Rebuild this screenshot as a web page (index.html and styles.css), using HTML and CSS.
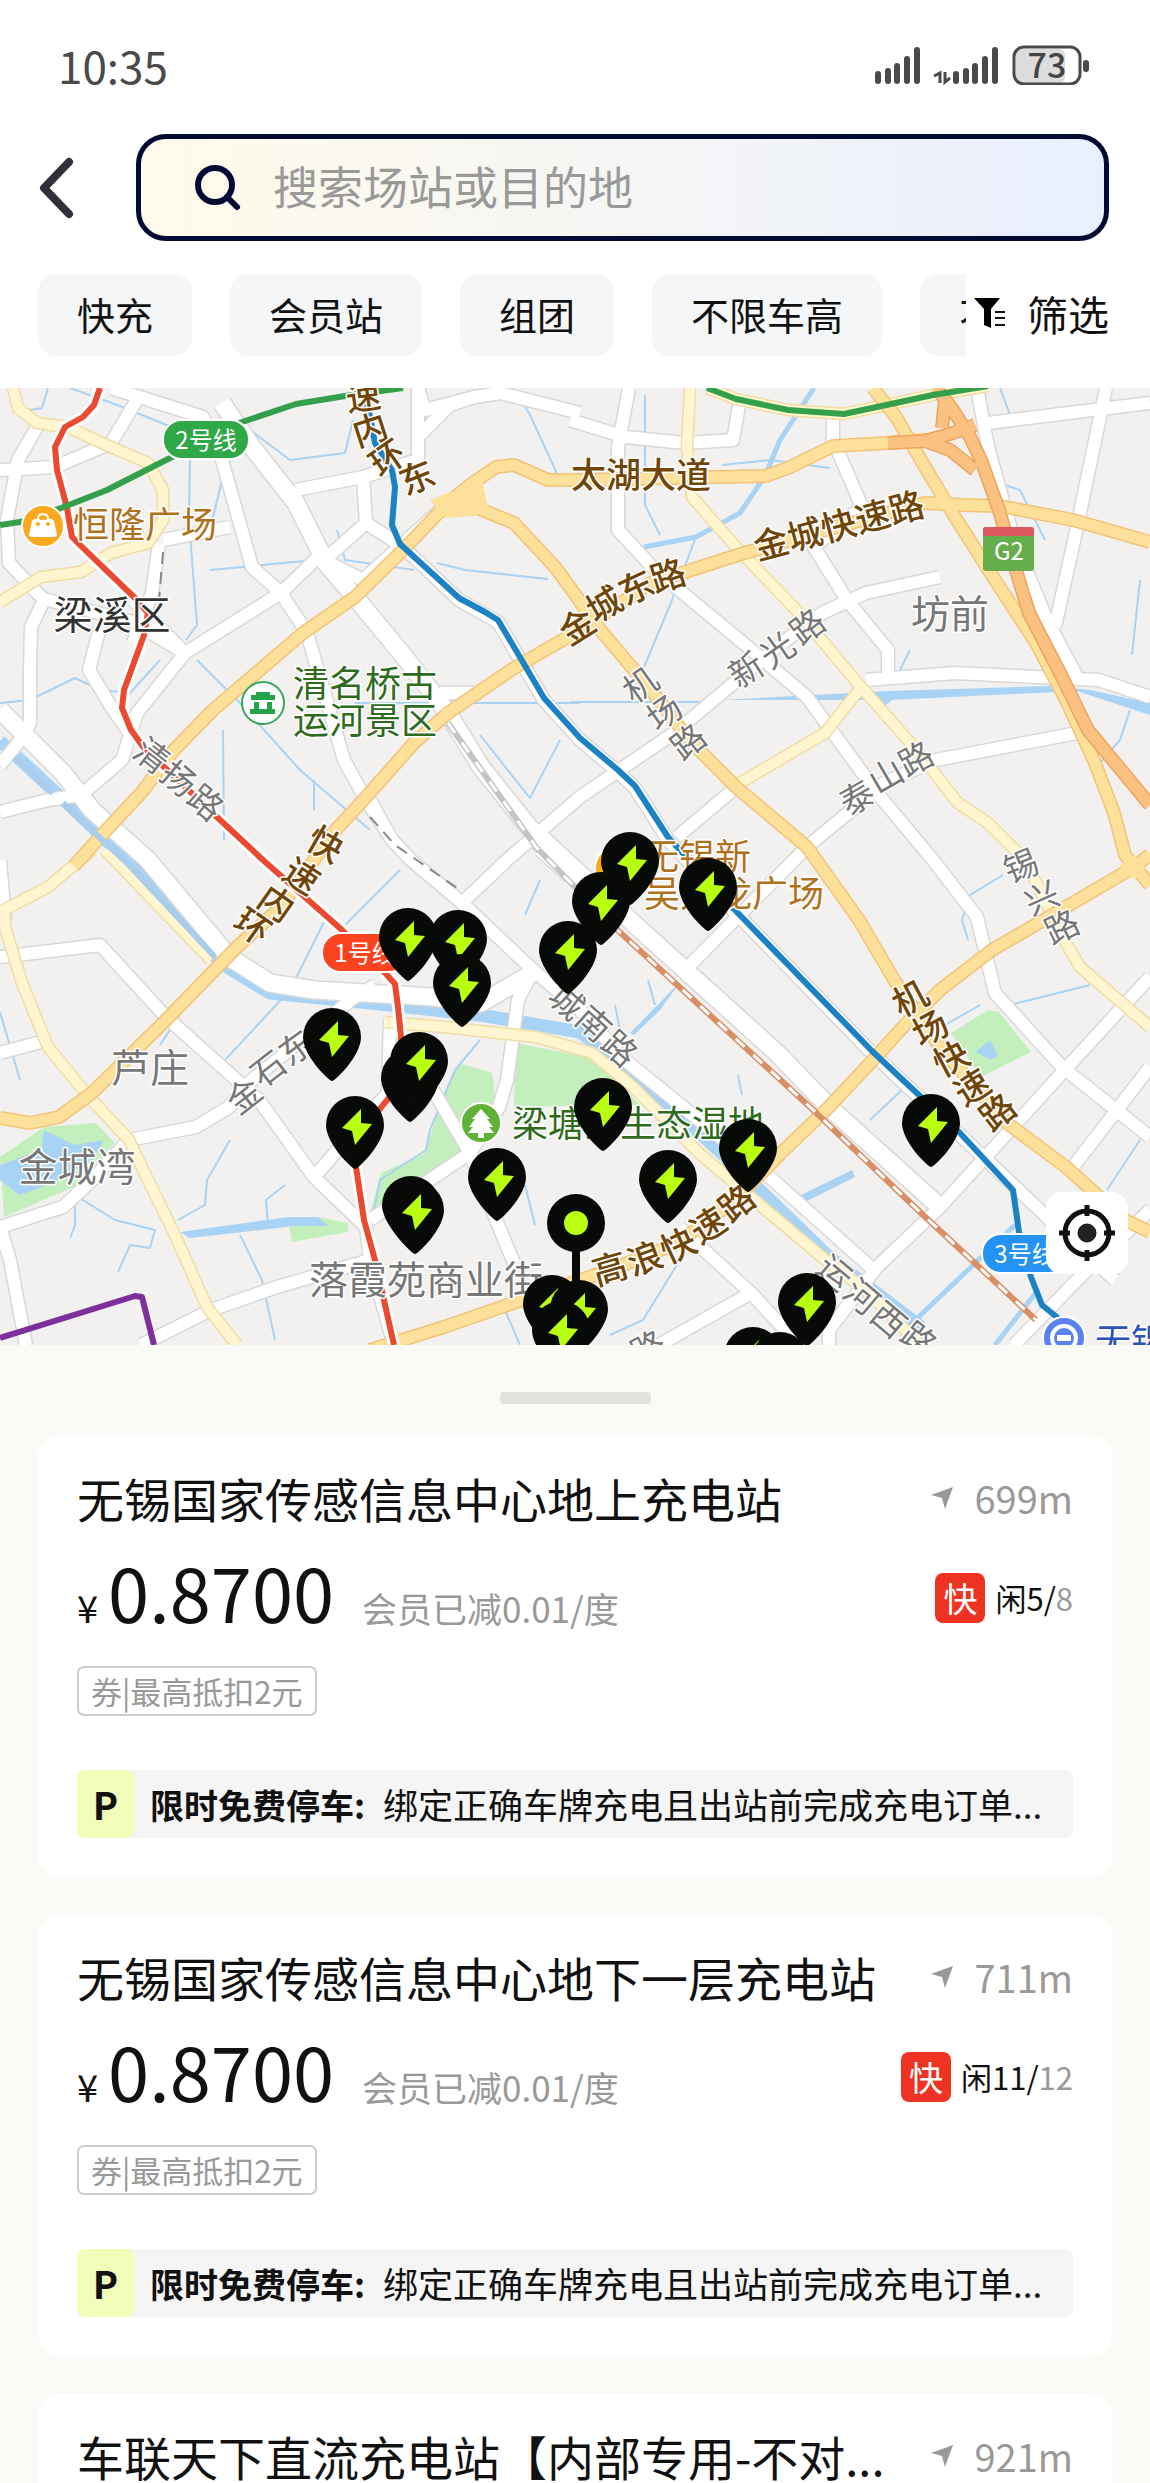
FILE: index.html
```html
<!DOCTYPE html>
<html lang="zh-CN">
<head>
  <meta charset="UTF-8">
  <meta name="viewport" content="width=device-width, initial-scale=1.0">
  <title>充电站地图</title>

  <link rel="stylesheet" href="styles.css">
</head>
<body>
  <header class="header">
    <div class="status-bar">
      <span class="time">10:35</span>
      <svg class="status-icons" width="216" height="40" viewBox="0 0 216 40" aria-hidden="true">
        <g class="signal">
          <path d="M4 29V36M14 26V36M23 21V36M33 14V36M43 5V36"/>
          <path d="M82 29V36M92 26V36M101 21V36M111 14V36M121 5V36"/>
        </g>
        <path class="arrows" d="M60 31L66 28V38M71 27V37L76 33"/>
        <rect class="charge" x="142" y="4" width="49" height="34" rx="6"/>
        <rect class="battery" x="140" y="2" width="66" height="37" rx="10"/>
        <path class="signal" d="M212 18V24"/>
        <text class="level" x="173" y="33">73</text>
      </svg>
    </div>
    <div class="search-row">
      <button class="back" aria-label="返回">
        <svg width="38" height="64" viewBox="0 0 38 64"><path d="M31 6L6 32L31 58"/></svg>
      </button>
      <label class="search">
        <svg width="48" height="48" viewBox="0 0 48 48"><circle cx="20" cy="21" r="17"/><path d="M32 33L42 43"/></svg>
        <input type="text" placeholder="搜索场站或目的地" aria-label="搜索">
      </label>
    </div>
    <div class="filter-row">
      <div class="chips">
        <button class="chip">快充</button>
        <button class="chip">会员站</button>
        <button class="chip">组团</button>
        <button class="chip">不限车高</button>
        <button class="chip">不限</button>
      </div>
      <button class="filter">
        <svg width="33" height="32" viewBox="0 0 33 32"><path d="M1 1H27L18 12V31L11 28V12Z"/><path class="lines" d="M22 15H32M22 21H32M22 28H32"/></svg>
        筛选
      </button>
    </div>
  </header>

  <section class="map">
    <svg class="map-canvas" viewBox="0 388 1150 957" role="img" aria-label="地图">
      <defs>
        <g id="streets">
          <path d="M0 470L55 467L111 443L141 393"/>
          <path d="M37 427L18 460L7 520L9 563L44 600L31 627L30 670V723L18 743L0 765"/>
          <path d="M159 543L152 593L133 643"/>
          <path d="M40 598L133 622L185 653L137 713L122 760L81 795L48 800L0 812"/>
          <path d="M100 627L89 670L110 705L131 735"/>
          <path d="M133 600L185 653L281 593L318 557L363 580L448 503"/>
          <path d="M111 388L203 417L222 460L252 567L281 593L307 633L344 760L366 800L392 840L411 860L462 903L533 970L518 1000L507 1080L499 1107L470 1153L370 1220"/>
          <path d="M580 413L500 393L474 397L425 410L418 388V460L363 477L296 490M363 477L366 523L330 555"/>
          <path d="M418 437L450 405L474 397"/>
          <path d="M366 523L403 547L459 600L498 622L544 700L580 740L618 772L635 788L668 840L733 910L873 1054L921 1099L960 1135L1047 1217L1115 1280"/>
          <path d="M163 540L230 527"/>
          <path d="M440 693H481"/>
          <path d="M0 957L100 945L166 1017L259 1100L314 1177L366 1227L370 1260L394 1345"/>
          <path d="M0 1053L48 1040"/>
          <path d="M129 1140L196 1127L229 1107L252 1080L351 1000L375 985"/>
          <path d="M0 1227L63 1207L92 1180L126 1143"/>
          <path d="M0 1227L10 1260L26 1345"/>
          <path d="M141 1345L211 1310L277 1287L370 1260"/>
          <path d="M314 1177L388 1093L390 1020"/>
          <path d="M433 1090L470 1153L499 1227L514 1263"/>
          <path d="M462 903L507 860L580 797L674 733L729 687L777 647L822 613L866 593L940 577"/>
          <path d="M370 800L392 840M0 860L5 920"/>
          <path d="M570 420L625 437L685 443L733 440L740 400"/>
          <path d="M629 388L618 447V530L655 570L748 647L807 697L829 727L877 793L933 860L977 917L995 993L1062 1067L1150 1137"/>
          <path d="M833 417V440L862 507L814 547L847 600L888 650V676"/>
          <path d="M866 680L955 673L1099 680L1150 697"/>
          <path d="M977 388L988 447L1014 540L1047 620L1077 677"/>
          <path d="M988 423L1150 403M1106 388L1077 527L1055 627"/>
          <path d="M1077 733L936 760L884 783L807 847L685 970L533 840"/>
          <path d="M570 877L540 850M733 790L677 837"/>
          <path d="M877 1267L829 1330L829 1345M877 1267L940 1207L1062 1073L1150 977"/>
          <path d="M1150 1067L1073 1167M1150 1210L1084 1273L1014 1345"/>
          <path d="M533 970L580 1010L625 1060L773 1180L877 1273"/>
          <path d="M680 1228L751 1293L799 1345M751 1293L659 1345"/>
        </g>
        <g id="avenues">
          <path d="M222 403L252 447L296 503L326 563L355 597L407 660L448 713L481 767L529 827L633 923L685 970L777 1053L829 1107L940 1207"/>
          <path d="M0 710L63 773L92 810L148 860L229 957L270 983L314 990L433 997L481 1003L533 973"/>
        </g>
        <g id="roads">
          <path d="M13 388L18 408L37 423L67 427L111 447L148 463L163 490V520L148 543L111 553L81 572L41 577L0 602"/>
          <path d="M92 850L48 887L4 910L5 927L22 983L48 1047L89 1097L129 1140L148 1180L174 1233L207 1307L237 1345"/>
          <path d="M105 850L211 960"/>
          <path d="M385 1022L444 1027L536 1037L592 1053L633 1087L699 1153L766 1210L829 1263L866 1290L920 1345"/>
          <path d="M690 388L687 447L692 497L736 547L799 613L855 680L914 747L958 803L988 823L1025 860L1066 943L1080 967L1150 1027"/>
          <path d="M859 690L825 733L740 783"/>
          <path d="M707 388L736 399L788 410L844 414L933 395L988 386"/>
        </g>
        <g id="expressways">
          <path d="M74 866L100 837L141 793L174 750L213 710L303 633L355 597L400 553L448 503L470 485L496 467L514 465L548 480L580 480L718 477L766 476L788 468L833 446L888 443L950 438"/>
          <path d="M470 505L514 523L555 567L577 597L592 620L651 690L692 743L736 787L807 847L859 920L896 983L940 1047L1007 1123L1066 1167L1125 1220L1150 1232"/>
          <path d="M333 833L366 797L414 743L448 713L514 668L580 630L651 583L744 553L851 523L925 503L962 505L1000 506"/>
          <path d="M1000 506L1073 520L1150 542"/>
          <path d="M333 833L281 907L237 947L166 1020L92 1093L59 1117L30 1123L0 1118"/>
          <path d="M873 388L896 417L925 467L955 517L995 580L1036 643L1066 700L1095 763L1114 813L1125 855L1150 885"/>
          <path d="M1150 855L1129 870L1066 907L992 950L940 990L903 1027L873 1060L829 1107L781 1153L735 1200L678 1243L610 1270L522 1300L444 1327L370 1350"/>
        </g>
        <g id="motorway">
          <path d="M936 388L951 407L970 437L981 460L999 510L1018 577L1029 613L1062 677L1088 730L1150 805"/>
          <path d="M888 443L925 441L953 433L975 425M925 441L950 450L975 470M945 400L942 428"/>
        </g>
        <g id="pin">
          <path class="pin-body" d="M0 0C-3 0 -29 -25 -29 -44A29 29 0 0 1 29 -44C29 -25 3 0 0 0Z"/>
          <path class="bolt" d="M6 -60L-13 -41L-3 -38L0 -24L17 -45L6 -46Z"/>
        </g>
      </defs>

      <rect class="land" y="388" width="1150" height="957"/>

      <g class="park">
        <path d="M459 1063L492 1073L497 1110L470 1153L370 1213L381 1173L425 1153L444 1093Z"/>
        <path d="M516 1043L592 1058L640 1105L514 1107Z"/>
        <path d="M289 1227L318 1217L348 1223V1232L292 1242Z"/>
        <path d="M0 1157L44 1127L96 1123L115 1143L74 1187L4 1217Z"/>
        <path d="M988 1010L999 1012L1031 1052L981 1077L951 1033Z"/>
      </g>
      <g class="lake">
        <path d="M0 1165L41 1150L44 1130L75 1145L104 1140L92 1160L48 1185L20 1195L28 1202L0 1180Z"/>
        <path d="M722 700L888 691L1051 686L1090 690L1150 703V715L1077 691L892 700L885 706L875 700Z"/>
        <path d="M976 1052L990 1040L998 1056L990 1060Z"/>
        <path d="M180 1232L289 1217L318 1217L328 1226L295 1226L190 1238Z"/>
        <path d="M795 1198L852 1170L855 1177L805 1202Z"/>
        <path d="M630 1033L680 982L660 1010L634 1035Z"/>
      </g>
      <g class="river">
        <path d="M0 741L67 803L126 859L222 964L270 993L370 1003L480 1015L580 1032L644 1082L729 1160L829 1257L921 1327"/>
      </g>
      <g class="stream">
        <path d="M48 388L42 408L18 412M70 388L120 406L203 440"/>
        <path class="wide" d="M814 388L780 440L765 476L740 513L696 537L644 547"/>
        <path d="M696 537L670 605L644 667M722 465L770 460L830 468M910 650L895 680"/>
        <path d="M190 450L189 520L197 625L186 640M222 480L210 530"/>
        <path d="M0 703L30 700L75 678L100 690L130 693L160 660"/>
        <path d="M337 530L345 560L414 570M437 563L465 570L548 579M210 570L337 558M514 388L530 415L560 480M250 430L290 460L345 453L353 420"/>
        <path d="M355 703H580M570 702H722M197 660L240 703L300 770L370 830"/>
        <path d="M223 730L224 840M314 780V810M480 735L530 798L560 740"/>
        <path d="M400 870L345 925M540 880L525 915M330 910L290 990L225 1060M196 990L160 1045"/>
        <path d="M480 1040L455 1070L430 1130L426 1150L380 1180L373 1215"/>
        <path d="M75 1195V1225L70 1238M75 1195L115 1220L155 1230L150 1248L130 1245L118 1272M230 1140L207 1180L205 1205L178 1220"/>
        <path d="M240 1235L262 1280L275 1340M0 1012L20 1080M285 1185L266 1200L268 1225"/>
        <path d="M525 1185L535 1225M683 1255L643 1320L610 1335M505 1310L520 1345"/>
        <path d="M990 480L1020 490L1045 540M1000 388L1010 415M645 395V505L660 535M1140 580L1132 655"/>
        <path d="M1130 710L1120 740L1100 763M970 895L1003 875M970 895L962 920L968 940"/>
        <path d="M1010 1005L1090 985M902 1090L870 1120M1140 1140L1107 1190M945 1025L980 1005"/>
        <path class="wide" d="M1015 1225L905 1330M1038 1290L995 1345"/>
        <path d="M738 1075L742 1095M648 980L655 1005M615 1005L620 1030"/>
      </g>

      <use href="#streets" class="street-casing"/>
      <use href="#avenues" class="avenue-casing"/>
      <use href="#streets" class="street"/>
      <use href="#avenues" class="avenue"/>
      <use href="#roads" class="road-casing"/>
      <use href="#roads" class="road"/>
      <use href="#expressways" class="expressway-casing"/>
      <path class="junction" d="M430 500L448 493L462 490L482 476L484 490L488 508L475 516L445 518Z"/>
      <use href="#expressways" class="expressway"/>
      <use href="#motorway" class="motorway-casing"/>
      <use href="#motorway" class="motorway"/>
      <path class="junction" d="M1120 865L1135 855L1145 868L1135 880Z"/>
      <path class="canal" d="M15 757L53 793M63 803L100 838L126 862L215 957"/>

      <path class="rail" d="M448 723L536 847L612 925"/>
      <path class="rail rail-dash" d="M448 723L536 847L612 925"/>
      <path class="rail rail-orange" d="M612 925L810 1107L921 1213L1036 1320"/>
      <path class="rail rail-dash" d="M612 925L810 1107L921 1213L1036 1320"/>
      <path class="tracks" d="M163 552L159 600M370 817L395 845L460 890"/>

      <g class="metro-halo">
        <path d="M100 388L94 405L83 417L65 427L55 447L57 470L67 508L72 537L80 545L135 598L148 613L144 635L124 690L122 708L131 730L144 748L218 818L263 860L342 930L387 975L395 984L398 1007L401 1037"/>
        <path d="M356 1167L364 1220L375 1260L394 1345"/>
      </g>
      <path class="metro line1" d="M100 388L94 405L83 417L65 427L55 447L57 470L67 508L72 537L80 545L135 598L148 613L144 635L124 690L122 708L131 730L144 748L218 818L263 860L342 930L387 975L395 984L398 1007L401 1037L403 1080L379 1110L355 1130L356 1167L364 1220L375 1260L394 1345"/>
      <path class="metro line2" d="M0 525L20 522L61 508L107 490L170 458L242 422L296 404L351 395L403 388M707 388L736 399L788 410L844 414L933 395L988 386"/>
      <path class="metro line3" d="M363 388L370 417L375 443L392 470L395 487L392 525L400 544L459 598L485 612L498 620L544 698L580 738L618 770L635 786L668 837L733 908L873 1052L921 1097L960 1133L1013 1190L1019 1232L1031 1277L1042 1305L1058 1318"/>
      <path class="metro line4" d="M0 1338L135 1296L142 1297L154 1345"/>

      <g class="line-tag">
        <rect class="tag2" x="163" y="420" width="86" height="39" rx="19"/><text x="206" y="438">2号线</text>
        <rect class="tag1" x="322" y="933" width="86" height="39" rx="19"/><text x="365" y="951">1号线</text>
        <rect class="tag3" x="982" y="1234" width="86" height="39" rx="19"/><text x="1025" y="1252">3号线</text>
      </g>

      <g class="shield">
        <rect class="shield-body" x="983" y="527" width="51" height="44" rx="3"/>
        <path class="shield-top" d="M983 536V530Q983 527 986 527H1031Q1034 527 1034 530V536Z"/>
        <text x="1009" y="549">G2</text>
      </g>

      <g class="label district">
        <text class="dark" x="112" y="612">梁溪区</text>
        <text x="950" y="611">坊前</text>
        <text x="150" y="1065">芦庄</text>
        <text x="77" y="1164">金城湾</text>
        <text x="426" y="1277">落霞苑商业街</text>
      </g>

      <g class="label expressway-name">
        <text x="641" y="472">太湖大道</text>
        <text transform="translate(838 523) rotate(-15)">金城快速路</text>
        <text transform="translate(576 624) rotate(-32)">金</text>
        <text transform="translate(603 602) rotate(-30)">城</text>
        <text transform="translate(635 585) rotate(-25)">东</text>
        <text transform="translate(667 573) rotate(-18)">路</text>
        <text transform="translate(363 394) rotate(-8)">速</text>
        <text transform="translate(369 427) rotate(-18)">内</text>
        <text transform="translate(386 456) rotate(-35)">环</text>
        <text transform="translate(416 475) rotate(-22)">东</text>
        <text transform="translate(327 842) rotate(30)">快</text>
        <text transform="translate(303 874) rotate(33)">速</text>
        <text transform="translate(278 901) rotate(35)">内</text>
        <text transform="translate(254 924) rotate(35)">环</text>
        <text transform="translate(909 996) rotate(-28)">机</text>
        <text transform="translate(929 1026) rotate(-28)">场</text>
        <text transform="translate(950 1056) rotate(-28)">快</text>
        <text transform="translate(971 1085) rotate(-32)">速</text>
        <text transform="translate(996 1110) rotate(-38)">路</text>
        <text transform="translate(609 1266) rotate(-16)">高</text>
        <text transform="translate(644 1256) rotate(-20)">浪</text>
        <text transform="translate(677 1243) rotate(-25)">快</text>
        <text transform="translate(707 1223) rotate(-32)">速</text>
        <text transform="translate(735 1201) rotate(-38)">路</text>
      </g>

      <g class="label road-name">
        <text transform="translate(153 754) rotate(38)">清</text>
        <text transform="translate(180 777) rotate(40)">扬</text>
        <text transform="translate(207 801) rotate(40)">路</text>
        <text transform="translate(745 668) rotate(-33)">新</text>
        <text transform="translate(776 648) rotate(-35)">光</text>
        <text transform="translate(806 625) rotate(-37)">路</text>
        <text transform="translate(639 683) rotate(-35)">机</text>
        <text transform="translate(663 711) rotate(-35)">场</text>
        <text transform="translate(687 740) rotate(-38)">路</text>
        <text transform="translate(856 796) rotate(-30)">泰</text>
        <text transform="translate(885 774) rotate(-30)">山</text>
        <text transform="translate(915 757) rotate(-28)">路</text>
        <text transform="translate(1020 864) rotate(-22)">锡</text>
        <text transform="translate(1041 896) rotate(-24)">兴</text>
        <text transform="translate(1061 925) rotate(-26)">路</text>
        <text transform="translate(243 1094) rotate(-38)">金</text>
        <text transform="translate(267 1067) rotate(-38)">石</text>
        <text transform="translate(295 1046) rotate(-36)">东</text>
        <text transform="translate(568 1000) rotate(42)">城</text>
        <text transform="translate(595 1022) rotate(42)">南</text>
        <text transform="translate(621 1047) rotate(42)">路</text>
        <text transform="translate(836 1271) rotate(40)">运</text>
        <text transform="translate(863 1295) rotate(40)">河</text>
        <text transform="translate(890 1318) rotate(40)">西</text>
        <text transform="translate(920 1338) rotate(38)">路</text>
        <text transform="translate(647 1346) rotate(-28)">路</text>
      </g>

      <g class="poi mall">
        <circle cx="43" cy="526" r="21"/>
        <path class="glyph" d="M32 521Q33 519 35 519H37Q37 513 43 513Q49 513 49 519H51Q53 519 54 521L57 535Q57 537 55 537H31Q29 537 29 535Z"/>
        <path class="eyes" d="M38 524V524M48 524V524M41 518Q43 516 45 518"/>
        <circle cx="616" cy="868" r="21"/>
      </g>
      <g class="label mall-name">
        <text x="145" y="522">恒隆广场</text>
        <text x="697" y="854">无锡新</text>
        <text x="734" y="891">吴九龙广场</text>
      </g>
      <g class="poi scenic">
        <circle cx="263" cy="703" r="21"/>
        <path class="glyph" d="M256 692H270V695H275V700H251V695H256ZM254 702H259V709H267V702H272V709H275V714H250V709H254Z"/>
      </g>
      <g class="poi forest">
        <circle cx="481" cy="1123" r="20"/>
        <path class="glyph" d="M481 1109L490 1119H487L493 1127H489L494 1133H484V1138H478V1133H468L473 1127H469L475 1119H472Z"/>
      </g>
      <g class="label park-name">
        <text x="365" y="681">清名桥古</text>
        <text x="365" y="718">运河景区</text>
        <text x="638" y="1121">梁塘河生态湿地</text>
      </g>
      <g class="poi station">
        <circle cx="1064" cy="1338" r="21"/>
        <circle class="ring" cx="1064" cy="1338" r="12"/>
        <path class="glyph" d="M1057 1335H1071V1341H1057Z"/>
      </g>
      <g class="label station-name">
        <text x="1131" y="1339">无锡</text>
      </g>

      <g class="pins">
        <use href="#pin" x="458" y="983"/>
        <use href="#pin" x="408" y="981"/>
        <use href="#pin" x="462" y="1027"/>
        <use href="#pin" x="332" y="1081"/>
        <use href="#pin" x="410" y="1122"/>
        <use href="#pin" x="419" y="1105"/>
        <use href="#pin" x="355" y="1169"/>
        <use href="#pin" x="411" y="1249"/>
        <use href="#pin" x="415" y="1254"/>
        <use href="#pin" x="497" y="1221"/>
        <use href="#pin" x="630" y="905"/>
        <use href="#pin" x="601" y="945"/>
        <use href="#pin" x="568" y="994"/>
        <use href="#pin" x="708" y="931"/>
        <use href="#pin" x="603" y="1151"/>
        <use href="#pin" x="668" y="1223"/>
        <use href="#pin" x="748" y="1192"/>
        <use href="#pin" x="931" y="1167"/>
        <use href="#pin" x="753" y="1400"/>
        <use href="#pin" x="780" y="1405"/>
        <use href="#pin" x="807" y="1346"/>
        <use href="#pin" x="552" y="1348"/>
        <use href="#pin" x="579" y="1353"/>
        <use href="#pin" x="561" y="1374"/>
      </g>
      <g class="here">
        <path d="M576 1240V1284"/>
        <circle class="pin-body" cx="576" cy="1223" r="29"/>
        <circle class="bolt" cx="576" cy="1223" r="12"/>
      </g>
    </svg>
    <button class="locate" aria-label="定位">
      <svg width="60" height="60" viewBox="0 0 60 60"><circle class="ring" cx="30" cy="30" r="22"/><path d="M30 2V13M30 47V58M2 30H13M47 30H58"/><circle class="dot" cx="30" cy="30" r="9"/></svg>
    </button>
  </section>

  <main class="sheet">
    <div class="handle"></div>

    <article class="card">
      <div class="card-head">
        <h2>无锡国家传感信息中心地上充电站</h2>
        <span class="distance"><svg width="22" height="22" viewBox="0 0 22 22"><path d="M0 8L22 0L14 22L11 11Z"/></svg>699m</span>
      </div>
      <div class="price-row">
        <p class="price"><small>¥</small><b>0.8700</b><span>会员已减0.01/度</span></p>
        <p class="idle"><span class="fast">快</span><span>闲5/<i>8</i></span></p>
      </div>
      <span class="coupon">券|最高抵扣2元</span>
      <div class="notice">
        <span class="parking">P</span>
        <p><strong>限时免费停车:</strong>绑定正确车牌充电且出站前完成充电订单...</p>
      </div>
    </article>

    <article class="card">
      <div class="card-head">
        <h2>无锡国家传感信息中心地下一层充电站</h2>
        <span class="distance"><svg width="22" height="22" viewBox="0 0 22 22"><path d="M0 8L22 0L14 22L11 11Z"/></svg>711m</span>
      </div>
      <div class="price-row">
        <p class="price"><small>¥</small><b>0.8700</b><span>会员已减0.01/度</span></p>
        <p class="idle"><span class="fast">快</span><span>闲11/<i>12</i></span></p>
      </div>
      <span class="coupon">券|最高抵扣2元</span>
      <div class="notice">
        <span class="parking">P</span>
        <p><strong>限时免费停车:</strong>绑定正确车牌充电且出站前完成充电订单...</p>
      </div>
    </article>

    <article class="card">
      <div class="card-head">
        <h2>车联天下直流充电站【内部专用-不对...</h2>
        <span class="distance"><svg width="22" height="22" viewBox="0 0 22 22"><path d="M0 8L22 0L14 22L11 11Z"/></svg>921m</span>
      </div>
    </article>
  </main>
</body>
</html>
```
FILE: styles.css
```css
* {
  box-sizing: border-box;
}

body {
  display: flex;
  flex-direction: column;
  height: 100vh;
  margin: 0;
  overflow: hidden;
  background-color: #fff;
  color: #111;
  font-family: "Noto Sans CJK SC", "Noto Sans", sans-serif;
}

h2, p {
  margin: 0;
  font-weight: 400;
}

button, input {
  padding: 0;
  border: none;
  background: none;
  color: inherit;
  font: inherit;
}

svg {
  display: block;
  flex-shrink: 0;
}

/* header */

.header {
  flex-shrink: 0;
  padding-bottom: 32px;
}

.status-bar {
  display: flex;
  align-items: center;
  justify-content: space-between;
  height: 134px;
  padding: 0 60px 4px 58px;
  color: #4a4a4a;
  font-size: 44px;
}

.signal {
  fill: none;
  stroke: #4a4a4a;
  stroke-width: 6;
  stroke-linecap: round;
}

.arrows {
  fill: none;
  stroke: #4a4a4a;
  stroke-width: 3;
}

.charge {
  fill: #dcdcdc;
}

.battery {
  fill: none;
  stroke: #4a4a4a;
  stroke-width: 3;
}

.level {
  fill: #444;
  font-size: 34px;
  font-weight: 500;
  text-anchor: middle;
}

.search-row {
  display: flex;
  align-items: center;
  gap: 60px;
  padding: 0 41px 0 38px;
}

.back path {
  fill: none;
  stroke: #2f3038;
  stroke-width: 8;
  stroke-linecap: round;
  stroke-linejoin: round;
}

.search {
  display: flex;
  flex: 1;
  align-items: center;
  gap: 30px;
  height: 107px;
  padding: 0 54px;
  border: 5px solid #030a33;
  border-radius: 30px;
  background: linear-gradient(90deg, #fffaea, #f4f5f6 55%, #e8effe);
}

.search svg {
  fill: none;
  stroke: #030a33;
  stroke-width: 6;
  stroke-linecap: round;
}

.search input {
  flex: 1;
  min-width: 0;
  padding-bottom: 4px;
  outline: none;
  font-size: 45px;
}

.search input::placeholder {
  color: #999;
  opacity: 1;
}

.filter-row {
  display: flex;
  padding: 33px 41px 0 38px;
}

.chips {
  display: flex;
  flex: 1;
  gap: 38px;
  min-width: 0;
  overflow: hidden;
}

.chip {
  flex-shrink: 0;
  height: 82px;
  padding: 0 39px 4px;
  border-radius: 18px;
  background-color: #f4f6f8;
  font-size: 38px;
}

.filter {
  display: flex;
  align-items: center;
  gap: 21px;
  padding: 0 0 4px 7px;
  font-size: 41px;
}

.filter .lines {
  stroke: #111;
  stroke-width: 2;
}

/* map */

.map {
  position: relative;
  flex-shrink: 0;
}

.map-canvas {
  width: 100%;
  height: auto;
}

.map-canvas g, .map-canvas use, .map-canvas path {
  stroke-linejoin: round;
}

.land { fill: #f2f1ef; }
.park { fill: #c3efbd; }
.lake { fill: #a9d3f5; }

.river, .stream, .canal, .street, .street-casing, .avenue, .avenue-casing,
.road, .road-casing, .expressway, .expressway-casing, .motorway,
.motorway-casing, .rail, .tracks, .metro, .metro-halo {
  fill: none;
}

.river { stroke: #a9d3f5; stroke-width: 13; }
.canal { stroke: #aacdec; stroke-width: 6; }
.stream { stroke: #a9d3f5; stroke-width: 2; }
.stream .wide { stroke-width: 5; }

.street-casing { stroke: #d8d8d8; stroke-width: 15; }
.street { stroke: #fff; stroke-width: 12; }
.avenue-casing { stroke: #d8d8d8; stroke-width: 20; }
.avenue { stroke: #fff; stroke-width: 17; }
.road-casing { stroke: #f0dca4; stroke-width: 13; }
.road { stroke: #fff6cf; stroke-width: 10; }
.expressway-casing { stroke: #f3c277; stroke-width: 14; }
.expressway { stroke: #fde09a; stroke-width: 11; }
.junction { fill: #fde09a; }
.motorway-casing { stroke: #eda45f; stroke-width: 14; }
.motorway { stroke: #fbc180; stroke-width: 11; }

.rail { stroke: #c4c4c4; stroke-width: 6; }
.rail-orange { stroke: #d98f66; }
.rail-dash { stroke: #fff; stroke-width: 3; stroke-dasharray: 12 12; }
.tracks { stroke: #888; stroke-width: 2; stroke-dasharray: 12 8; }

.metro { stroke-width: 6; }
.metro-halo { stroke: #fff; stroke-width: 12; }
.line1 { stroke: #ea4a2f; }
.line2 { stroke: #35a04b; }
.line3 { stroke: #1d82c4; }
.line4 { stroke: #7d2f9b; }

.map-canvas text {
  dominant-baseline: central;
  text-anchor: middle;
}

.line-tag rect {
  stroke: #fff;
  stroke-width: 2;
}

.line-tag text, .shield text {
  fill: #fff;
  font-size: 24px;
}

.tag1 { fill: #fa4420; }
.tag2 { fill: #2fa848; }
.tag3 { fill: #2493f3; }

.shield-body { fill: #66ae4c; }
.shield-top { fill: #db5860; }

.label {
  fill: #777;
  stroke: #fff;
  stroke-width: 3;
  paint-order: stroke;
  font-size: 36px;
}

.district { font-size: 39px; }
.district .dark { fill: #333; }
.expressway-name { fill: #704508; font-size: 35px; font-weight: 500; }
.road-name { font-size: 34px; }
.mall-name { fill: #b0701c; }
.park-name { fill: #2f6b1c; }
.station-name { fill: #2b52b8; }

.poi { stroke: #fff; stroke-width: 2; }
.poi .glyph { fill: #fff; stroke: none; }
.mall { fill: #fba81f; }
.mall .eyes { fill: none; stroke: #fba81f; stroke-width: 4; stroke-linecap: round; }
.scenic { fill: #fff; stroke: #36a65c; }
.scenic .glyph { fill: #25a348; }
.forest { fill: #5fb236; }
.station { fill: #5b82ec; }
.station .ring { fill: none; stroke-width: 4; }

.pin-body { fill: #080a08; }
.bolt { fill: #b8ff12; }
.here path { stroke: #080a08; stroke-width: 8; }

.locate {
  position: absolute;
  right: 22px;
  bottom: 71px;
  display: flex;
  align-items: center;
  justify-content: center;
  width: 82px;
  height: 82px;
  border-radius: 16px;
  background-color: #fff;
}

.locate .ring {
  fill: none;
  stroke: #111;
  stroke-width: 5;
}

.locate path {
  stroke: #111;
  stroke-width: 5;
}

.locate .dot {
  fill: #222;
  stroke: #111;
  stroke-width: 1;
}

/* station list */

.sheet {
  display: flex;
  flex: 1;
  flex-direction: column;
  gap: 38px;
  min-height: 0;
  padding: 47px 38px 0;
  overflow: hidden;
  background-color: #fafaf6;
}

.handle {
  flex-shrink: 0;
  align-self: center;
  width: 151px;
  height: 12px;
  margin-bottom: -6px;
  border-radius: 4px;
  background-color: #e2e3df;
}

.card {
  flex-shrink: 0;
  padding: 32px 39px 39px;
  border-radius: 22px;
  background-color: #fff;
}

.card-head {
  display: flex;
  align-items: center;
  justify-content: space-between;
}

.card h2 {
  font-size: 47px;
  line-height: 60px;
  white-space: nowrap;
}

.distance {
  display: flex;
  align-items: center;
  gap: 22px;
  color: #999;
  font-size: 38px;
  line-height: 60px;
}

.distance svg {
  fill: #999;
}

.price-row {
  display: flex;
  align-items: flex-end;
  justify-content: space-between;
  margin-top: 26px;
}

.price {
  display: flex;
  align-items: baseline;
  line-height: 40px;
}

.price small {
  font-size: 38px;
}

.price b {
  margin: 0 28px 0 10px;
  font-size: 74px;
  font-weight: 400;
  line-height: 74px;
}

.price span {
  color: #999;
  font-size: 35px;
}

.idle {
  display: flex;
  align-items: center;
  gap: 10px;
  padding-bottom: 5px;
  font-size: 31px;
  line-height: 50px;
}

.idle i {
  color: #999;
  font-style: normal;
}

.fast {
  width: 50px;
  border-radius: 8px;
  background-color: #ee3322;
  color: #fff;
  font-size: 34px;
  text-align: center;
}

.coupon {
  display: block;
  width: fit-content;
  margin-top: 38px;
  padding: 0 12px;
  border: 2px solid #ccc;
  border-radius: 7px;
  color: #999;
  font-size: 31px;
  line-height: 46px;
}

.notice {
  display: flex;
  margin-top: 54px;
  overflow: hidden;
  border-radius: 8px;
  background-color: #f5f5f5;
  font-size: 35px;
  line-height: 67px;
}

.notice p {
  overflow: hidden;
  padding-left: 16px;
  white-space: nowrap;
}

.notice strong {
  margin-right: 18px;
  font-size: 34px;
}

.parking {
  flex-shrink: 0;
  width: 57px;
  border-radius: 8px;
  background-color: #f1fdb9;
  font-size: 38px;
  font-weight: 700;
  text-align: center;
}
```
